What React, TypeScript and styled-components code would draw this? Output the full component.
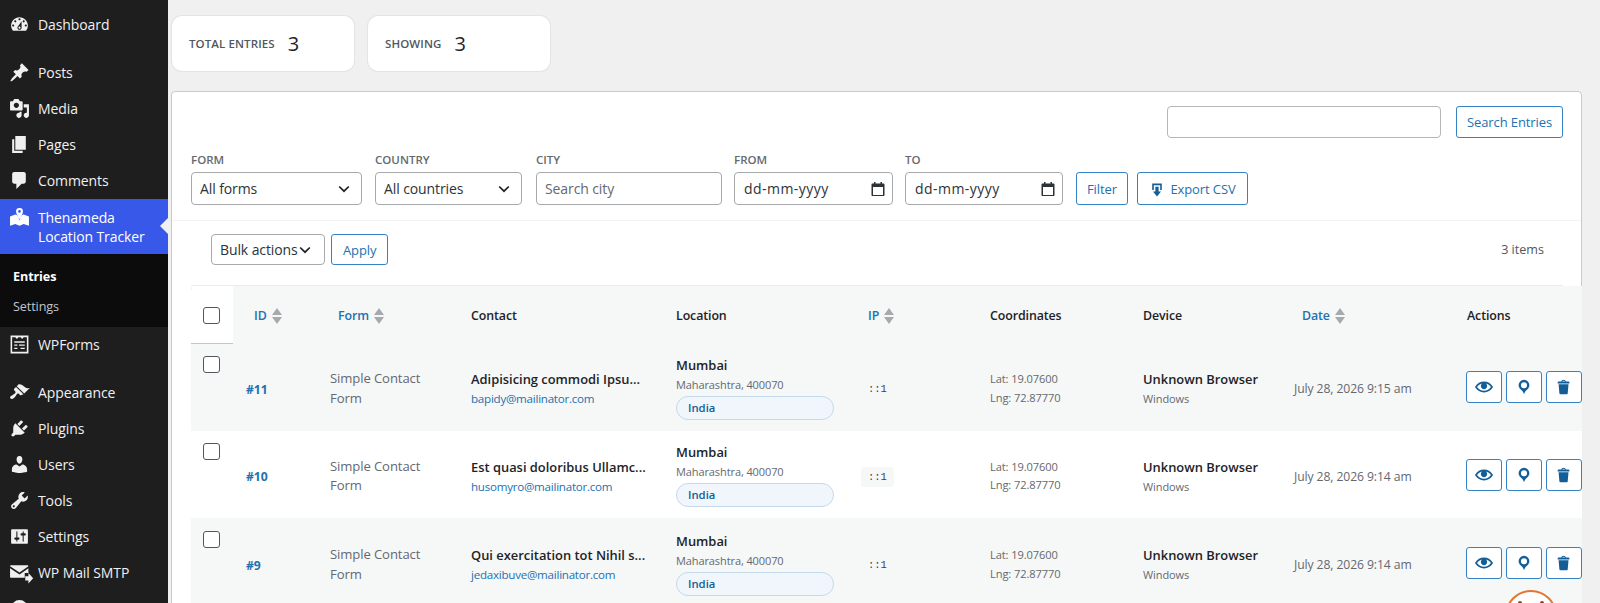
import React from 'react';
import styled, { createGlobalStyle } from 'styled-components';

const GlobalStyle = createGlobalStyle`
  html, body {
    margin: 0;
    height: 100%;
    overflow: hidden;
    background: #f0f0f1;
  }
  body {
    font-family: "Open Sans", "Noto Sans", sans-serif;
    color: #3c434a;
  }
`;

const chevron = `url("data:image/svg+xml,%3Csvg xmlns='http://www.w3.org/2000/svg' viewBox='0 0 12 8'%3E%3Cpath d='M1.2 1.5 6 6.2l4.8-4.7' fill='none' stroke='%231d2327' stroke-width='1.7'/%3E%3C/svg%3E")`;

const Page = styled.div`
  display: flex;
  height: 603px;
  overflow: hidden;
  position: relative;
`;

// admin menu
const Sidebar = styled.nav`
  width: 168px;
  flex: none;
  background: #1e1e1e;
  padding-top: 7px;
`;

const MenuItem = styled.div<{ $active?: boolean }>`
  position: relative;
  display: flex;
  align-items: center;
  gap: 8px;
  box-sizing: border-box;
  padding: 0 0 ${p => (p.$active ? 0 : 2)}px 9px;
  height: ${p => (p.$active ? 55 : 36)}px;
  color: ${p => (p.$active ? '#fff' : '#f0f0f1')};
  font-size: 14px;
  letter-spacing: -0.1px;
  line-height: 19px;
  background: ${p => (p.$active ? '#3858e9' : 'transparent')};
  svg {
    width: 21px;
    height: 21px;
    flex: none;
    fill: currentColor;
    overflow: visible;
    ${p => p.$active && 'align-self: flex-start; margin-top: 9px;'}
  }
`;

const MenuGap = styled.div<{ $h?: number }>`
  height: ${p => p.$h ?? 12}px;
`;

const ActiveArrow = styled.span`
  position: absolute;
  right: 0;
  top: 19px;
  border: 8.5px solid transparent;
  border-left: 0;
  border-right-color: #f0f0f1;
  border-right-width: 8px;
`;

const Submenu = styled.div`
  background: #0c0c0c;
  height: 73px;
  padding-top: 8px;
  box-sizing: border-box;
`;

const SubItem = styled.div<{ $current?: boolean }>`
  height: 30px;
  line-height: 30px;
  padding-left: 13px;
  font-size: 12.6px;
  letter-spacing: -0.1px;
  color: ${p => (p.$current ? '#fff' : '#c3c4c7')};
  font-weight: ${p => (p.$current ? 700 : 400)};
`;

// content
const Main = styled.main`
  flex: 1;
  min-width: 0;
  padding: 16px 18px 0 3px;
`;

const StatsRow = styled.div`
  display: flex;
  gap: 14px;
  margin: 0 0 20px 1px;
`;

const StatCard = styled.div`
  width: 182px;
  height: 55px;
  box-sizing: border-box;
  display: flex;
  align-items: center;
  gap: 13px;
  padding: 0 0 0 17px;
  background: #fff;
  border-radius: 10px;
  box-shadow: 0 0 0 1px #e4e4e6;
`;

const StatLabel = styled.span`
  font-size: 11.5px;
  font-weight: 600;
  letter-spacing: 0.1px;
  color: #50575e;
`;

const StatValue = styled.span`
  font-size: 20px;
  color: #1d2327;
`;

const Panel = styled.section`
  background: #fff;
  border: 1px solid #c9cacc;
  border-radius: 4px 4px 0 0;
  height: 520px;
`;

const SearchRow = styled.div`
  display: flex;
  justify-content: flex-end;
  gap: 15px;
  padding: 14px 18px 0 0;
`;

const SearchInput = styled.input`
  width: 274px;
  height: 32px;
  box-sizing: border-box;
  border: 1px solid #b5b6b8;
  border-radius: 4px;
  background: #fff;
`;

const OutlineButton = styled.button<{ $h?: number; $px?: number }>`
  display: inline-flex;
  align-items: center;
  justify-content: center;
  gap: 5px;
  box-sizing: border-box;
  height: ${p => p.$h ?? 33}px;
  padding: 0 ${p => p.$px ?? 11}px;
  background: #fff;
  border: 1px solid #3582c4;
  border-radius: 3px;
  color: #2271b1;
  font: 400 13px "Open Sans", sans-serif;
  letter-spacing: -0.1px;
  svg { width: 16px; height: 16px; fill: #135e96; margin-top: 2px; }
`;

const FilterBar = styled.div`
  display: flex;
  align-items: flex-end;
  padding: 14px 0 15px 19px;
  border-bottom: 1px solid #f3f3f4;
`;

const FilterField = styled.label<{ $w: number; $mr?: number }>`
  display: flex;
  flex-direction: column;
  width: ${p => p.$w}px;
  margin-right: ${p => p.$mr ?? 13}px;
`;

const FilterLabel = styled.span`
  height: 20px;
  font-size: 11.5px;
  font-weight: 600;
  line-height: 16px;
  color: #646970;
`;

const FieldBase = `
  height: 33px;
  box-sizing: border-box;
  border: 1px solid #a8a9ab;
  border-radius: 4px;
  background-color: #fff;
  font: 400 14px "Open Sans", sans-serif;
  letter-spacing: -0.1px;
  color: #2c3338;
`;

const FilterSelect = styled.select`
  ${FieldBase}
  width: 100%;
  appearance: none;
  padding: 0 8px;
  background-image: ${chevron};
  background-repeat: no-repeat;
  background-size: 12px 8px;
  background-position: right 11px center;
`;

const FilterInput = styled.input`
  ${FieldBase}
  width: 100%;
  padding: 0 8px;
  &::placeholder { color: #646970; opacity: 1; }
`;

const DateBox = styled.div`
  ${FieldBase}
  letter-spacing: 0.45px;
  display: flex;
  align-items: center;
  justify-content: space-between;
  padding: 0 6px 0 9px;
  svg { width: 16px; height: 16px; }
`;

const ButtonGroup = styled.div`
  display: flex;
  gap: 9px;
`;

const BulkRow = styled.div`
  display: flex;
  align-items: center;
  height: 31px;
  margin-top: 13px;
  padding: 0 37px 0 39px;
  gap: 6px;
`;

const BulkSelect = styled.select`
  ${FieldBase}
  height: 31px;
  width: 114px;
  appearance: none;
  padding: 0 8px;
  background-image: ${chevron};
  background-repeat: no-repeat;
  background-size: 12px 8px;
  background-position: right 13px center;
`;

const ItemCount = styled.span`
  margin-left: auto;
  font-size: 12.6px;
  color: #50575e;
`;

const TableWrap = styled.div`
  margin: 20px 0 0 19px;
`;

const Rule = styled.div`
  height: 1px;
  margin-right: 18px;
  background: #ececed;
`;

const Table = styled.table`
  width: 100%;
  table-layout: fixed;
  border-collapse: collapse;
  font-size: 12.8px;
`;

const HeadRow = styled.tr`
  height: 57px;
  background: #f6f7f7;
  box-shadow: 0 1px 0 #f0f0f1;
`;

const HeadCheck = styled.th`
  background: #fff;
  padding: 2px 0 0 12px;
  text-align: left;
  border-bottom: 1px solid #c3c4c7;
  border-radius: 6px 0 0 0;
`;

const Th = styled.th<{ $inset?: number; $link?: boolean }>`
  padding: 1px 0 0 ${p => p.$inset ?? 13}px;
  text-align: left;
  font-size: 12.4px;
  font-weight: 600;
  letter-spacing: -0.1px;
  color: ${p => (p.$link ? '#2271b1' : '#1d2327')};
  svg { width: 10px; height: 16px; margin-left: 5px; vertical-align: -4px; fill: #a7aaad; }
`;

const Row = styled.tr<{ $alt: boolean }>`
  height: 87px;
  background: ${p => (p.$alt ? '#f6f7f7' : '#fff')};
  box-shadow: 0 1px 0 #f0f0f1;
  &:first-child { height: 88px; }
  &:nth-child(3) { height: 90px; }
  &:nth-child(3) input { margin-top: 1px; }
`;

const Td = styled.td<{ $flush?: boolean }>`
  padding: ${p => (p.$flush ? 0 : 3)}px 0 0 13px;
  vertical-align: middle;
`;

const CheckCell = styled.td`
  padding: 12px 0 0 12px;
  vertical-align: top;
`;

const Checkbox = styled.input.attrs({ type: 'checkbox' })`
  appearance: none;
  display: block;
  width: 17px;
  height: 17px;
  margin: 0;
  background: #fff;
  border: 1.5px solid #50575e;
  border-radius: 3px;
  box-sizing: border-box;
`;

const EntryId = styled.a`
  font-weight: 700;
  color: #2271b1;
  font-size: 12.2px;
  letter-spacing: -0.1px;
`;

const FormName = styled.div`
  color: #646970;
  line-height: 19.5px;
  font-size: 13.1px;
  letter-spacing: -0.1px;
`;

const Strong = styled.div`
  font-size: 12.9px;
  font-weight: 600;
  color: #1d2327;
  line-height: 20px;
  white-space: nowrap;
`;

const Email = styled.a`
  display: block;
  font-size: 11.6px;
  line-height: 19px;
  color: #2271b1;
  letter-spacing: -0.25px;
`;

const Sub = styled.div`
  font-size: 11px;
  line-height: 19px;
  color: #646970;
  letter-spacing: -0.1px;
`;

const CountryPill = styled.span`
  display: block;
  width: 158px;
  height: 24px;
  box-sizing: border-box;
  margin-top: 2px;
  padding-left: 11px;
  line-height: 22px;
  font-size: 11.3px;
  font-weight: 600;
  color: #135e96;
  background: #f0f6fc;
  border: 1px solid #c5d9ed;
  border-radius: 12px;
`;

const IpCode = styled.code`
  display: inline-block;
  margin-left: -7px;
  padding: 0 7px;
  height: 20px;
  font: 400 10.5px/20px "Liberation Mono", monospace;
  color: #3c434a;
  background: #f6f7f7;
  border-radius: 3px;
`;

const Coords = styled.div`
  font-size: 11.1px;
  line-height: 18.5px;
  color: #646970;
  letter-spacing: -0.1px;
`;

const DateText = styled.div`
  font-size: 12.2px;
  color: #646970;
  letter-spacing: -0.1px;
  white-space: nowrap;
`;

const Actions = styled.div`
  display: flex;
  gap: 4px;
  margin-left: -1px;
`;

const IconButton = styled.button`
  width: 36px;
  height: 32px;
  padding: 0;
  display: flex;
  align-items: center;
  justify-content: center;
  background: #fff;
  border: 1px solid #3582c4;
  border-radius: 3px;
  svg { width: 18px; height: 18px; fill: #135e96; }
`;

const HelpBubble = styled.div`
  position: absolute;
  left: 1505px;
  top: 590px;
  width: 52px;
  height: 52px;
  box-sizing: border-box;
  border: 2.5px solid #e27730;
  border-radius: 50%;
  background: #fff;
  &::before, &::after {
    content: '';
    position: absolute;
    top: 9px;
    width: 4px;
    height: 4px;
    border-radius: 50%;
    background: #7a4a2a;
  }
  &::before { left: 11px; }
  &::after { right: 11px; }
`;

const icons = {
  dashboard: 'M3.76 16h12.48c1.1-1.37 1.76-3.11 1.76-5 0-4.42-3.58-8-8-8s-8 3.58-8 8c0 1.89.66 3.63 1.76 5zM10 4c.55 0 1 .45 1 1s-.45 1-1 1-1-.45-1-1 .45-1 1-1zM6 6c.55 0 1 .45 1 1s-.45 1-1 1-1-.45-1-1 .45-1 1-1zm8 0c.55 0 1 .45 1 1s-.45 1-1 1-1-.45-1-1 .45-1 1-1zm-5.37 5.55L12 7v6c0 1.1-.9 2-2 2s-2-.9-2-2c0-.57.24-1.08.63-1.45zM4 10c.55 0 1 .45 1 1s-.45 1-1 1-1-.45-1-1 .45-1 1-1zm12 0c.55 0 1 .45 1 1s-.45 1-1 1-1-.45-1-1 .45-1 1-1zm-5 3c0-.55-.45-1-1-1s-1 .45-1 1 .45 1 1 1 1-.45 1-1z',
  post: 'M10.44 3.02l1.82-1.82 6.36 6.35-1.83 1.82c-1.05-.68-2.48-.57-3.41.36l-.75.75c-.92.93-1.04 2.35-.35 3.41l-1.83 1.82-2.41-2.41-2.8 2.79c-.42.42-3.38 2.71-3.8 2.29s1.86-3.39 2.28-3.81l2.79-2.79L4.1 9.36l1.83-1.82c1.05.69 2.48.57 3.4-.36l.75-.75c.93-.92 1.05-2.35.36-3.41z',
  media: 'M13 11V4c0-.55-.45-1-1-1h-1.67L9 1H5L3.67 3H2c-.55 0-1 .45-1 1v7c0 .55.45 1 1 1h10c.55 0 1-.45 1-1zM7 4.5c1.38 0 2.5 1.12 2.5 2.5S8.38 9.5 7 9.5 4.5 8.38 4.5 7 5.62 4.5 7 4.5zM14 6h5v10.5c0 1.38-1.12 2.5-2.5 2.5S14 17.88 14 16.5s1.12-2.5 2.5-2.5c.17 0 .34.02.5.05V9h-3V6zm-4 8.05V13h2v3.5c0 1.38-1.12 2.5-2.5 2.5S7 17.88 7 16.5 8.12 14 9.5 14c.17 0 .34.02.5.05z',
  page: 'M6 15V2h10v13H6zm-1 1h8v2H3V5h2v11z',
  comments: 'M5 2h9c1.1 0 2 .9 2 2v7c0 1.1-.9 2-2 2h-2l-5 5v-5H5c-1.1 0-2-.9-2-2V4c0-1.1.9-2 2-2z',
  appearance: 'M14.48 11.06L7.41 3.99l1.5-1.5c.5-.56 2.3-.47 3.51.32 1.21.8 1.43 1.28 2.91 2.1 1.18.64 2.45 1.26 4.45.85zm-.71.71L6.7 4.7 4.93 6.47c-.39.39-.39 1.02 0 1.41l1.06 1.06c.39.39.39 1.03 0 1.42-.6.6-1.43 1.11-2.21 1.69-.35.26-.7.53-1.01.84C1.43 13.23.4 14.75 1.46 15.82c1.07 1.06 2.59.03 3.95-1.32.31-.31.58-.66.84-1.01.58-.78 1.09-1.61 1.69-2.21.39-.39 1.03-.39 1.42 0l1.06 1.06c.39.39 1.02.39 1.41 0z',
  plugins: 'M13.11 4.36L9.87 7.6 8 5.73l3.24-3.24c.35-.34 1.05-.2 1.56.32.52.51.66 1.21.31 1.55zm-8 1.77l.91-1.12 9.01 9.01-1.19.84c-.71.71-2.63 1.16-3.82 1.16H6.14L4.9 17.26c-.59.59-1.54.59-2.12 0-.59-.58-.59-1.53 0-2.12l1.24-1.24v-3.88c0-1.13.4-3.19 1.09-3.89zm7.26 3.97l3.24-3.24c.34-.35 1.04-.21 1.55.31.52.51.66 1.21.31 1.55l-3.24 3.25z',
  users: 'M10 9.25c-2.27 0-2.73-3.44-2.73-3.44C7 4.02 7.82 2 9.97 2c2.16 0 2.98 2.02 2.71 3.81 0 0-.41 3.44-2.68 3.44zm0 2.57L12.72 10c2.39 0 4.52 2.33 4.52 4.53v2.49s-3.65 1.13-7.24 1.13c-3.65 0-7.24-1.13-7.24-1.13v-2.49c0-2.25 1.94-4.48 4.47-4.48z',
  tools: 'M16.68 9.77c-1.34 1.34-3.3 1.67-4.95.99l-5.41 6.52c-.99.99-2.59.99-3.58 0s-.99-2.59 0-3.57l6.52-5.42c-.68-1.65-.35-3.61.99-4.95 1.28-1.28 3.12-1.62 4.72-1.06l-2.89 2.89 2.82 2.82 2.86-2.87c.53 1.58.18 3.39-1.08 4.65zM3.81 16.21c.4.39 1.04.39 1.43 0 .4-.4.4-1.04 0-1.43-.39-.4-1.03-.4-1.43 0-.39.39-.39 1.03 0 1.43z',
  settings: 'M18 16V4c0-.55-.45-1-1-1H3c-.55 0-1 .45-1 1v12c0 .55.45 1 1 1h14c.55 0 1-.45 1-1zM8 11h1c.55 0 1 .45 1 1s-.45 1-1 1H8v1.5c0 .28-.22.5-.5.5s-.5-.22-.5-.5V13H6c-.55 0-1-.45-1-1s.45-1 1-1h1V5.5c0-.28.22-.5.5-.5s.5.22.5.5V11zm5-2h-1c-.55 0-1-.45-1-1s.45-1 1-1h1V5.5c0-.28.22-.5.5-.5s.5.22.5.5V7h1c.55 0 1 .45 1 1s-.45 1-1 1h-1v5.5c0 .28-.22.5-.5.5s-.5-.22-.5-.5V9z',
  map: 'M1 8l5-1.800 2.300.8L10 11.800 11.700 7l2.300-.8L19 8v9l-5-1.700L10 17l-4-1.700L1 17zM10 0a3.300 3.300 0 0 1 3.300 3.300c0 1.800-2 5.200-3.300 7.300-1.300-2.100-3.300-5.500-3.300-7.300A3.300 3.300 0 0 1 10 0zm0 2a1.300 1.300 0 1 0 0 2.600A1.300 1.300 0 0 0 10 2z',
  wpforms: 'M1.500 1.500h17v17h-17zM3 3v14h14V3h-3l-1.500 1.700L11 3H9L7.500 4.700 6 3zM5 7h10v1.300H5zM5 10h3v1.300H5zM9.500 10H15v1.300H9.500zM5 13h3v1.300H5zM11 13h4v1.300h-4z',
  mail: 'M2 3h15.500c.5 0 1 .4 1 1L10 10 1 4c0-.6.5-1 1-1zM1 6l9 6 8.500-6v4.500H15V15H2c-.6 0-1-.4-1-1zM15.500 13.500H18.500V10.500l4.500 5-4.500 5v-3H15.500z',
  eye: 'M19.700 9.400C17.700 6 14 3.900 10 3.900S2.300 6 .3 9.400L0 10l.3.600c2 3.400 5.700 5.500 9.700 5.500s7.700-2.100 9.700-5.500l.3-.6-.3-.6zM10 14.100c-3.100 0-6-1.600-7.700-4.100C3.600 8 5.700 6.600 8 6.100c-.9.600-1.500 1.700-1.500 2.900 0 1.900 1.600 3.500 3.500 3.500s3.500-1.600 3.500-3.500c0-1.200-.6-2.300-1.500-2.900 2.300.5 4.400 1.900 5.700 3.900-1.700 2.500-4.600 4.100-7.700 4.100z',
  pin: 'M10 2a6 6 0 0 0-6 6c0 2 1.100 3.400 2.500 4.900 1.500 1.500 2.900 3 3.500 5.100.6-2.100 2-3.600 3.500-5.100C14.900 11.400 16 10 16 8a6 6 0 0 0-6-6zm0 2.600a3.400 3.400 0 1 1 0 6.800 3.400 3.400 0 0 1 0-6.800z',
  trash: 'M12 4h3c.6 0 1 .4 1 1v1H3V5c0-.6.500-1 1-1h3c.2-1.100 1.300-2 2.500-2s2.300.9 2.500 2zM8 4h3c-.2-.6-.9-1-1.500-1S8.200 3.400 8 4zM4 7h11l-.9 10.100c0 .5-.5.9-1 .9H5.900c-.5 0-.9-.4-1-.9L4 7z',
  download: 'M14 4v6h2V2H4v8h2V4h8zm-2 2v6h3l-5 6-5-6h3V6h4z',
  circle: 'M10 2a8 8 0 1 0 0 16 8 8 0 0 0 0-16z',
};

const Icon = ({ name }: { name: keyof typeof icons }) => (
  <svg viewBox="0 0 20 20" aria-hidden="true">
    <path fillRule="evenodd" d={icons[name]} />
  </svg>
);

const SortIcon = () => (
  <svg viewBox="0 0 10 16" aria-hidden="true">
    <path d="M5 0l5 7H0zM0 9h10l-5 7z" />
  </svg>
);

const CalendarIcon = () => (
  <svg viewBox="0 0 16 16" aria-hidden="true">
    <path
      fill="#2c3338"
      fillRule="evenodd"
      d="M4 1h1.500v1.500h5V1H12v1.500h1.500c.6 0 1 .4 1 1v10.500c0 .6-.4 1-1 1h-11c-.6 0-1-.4-1-1V3.500c0-.6.4-1 1-1H4zM3 6v8h10V6z"
    />
  </svg>
);

const topMenu: [keyof typeof icons, string][] = [
  ['post', 'Posts'],
  ['media', 'Media'],
  ['page', 'Pages'],
  ['comments', 'Comments'],
];

const lowerMenu: [keyof typeof icons, string][] = [
  ['appearance', 'Appearance'],
  ['plugins', 'Plugins'],
  ['users', 'Users'],
  ['tools', 'Tools'],
  ['settings', 'Settings'],
  ['mail', 'WP Mail SMTP'],
  ['circle', ''],
];

const entries = [
  { id: '#11', name: 'Adipisicing commodi Ipsu...', email: 'bapidy@mailinator.com', date: 'July 28, 2026 9:15 am' },
  { id: '#10', name: 'Est quasi doloribus Ullamc...', email: 'husomyro@mailinator.com', date: 'July 28, 2026 9:14 am' },
  { id: '#9', name: 'Qui exercitation tot Nihil s...', email: 'jedaxibuve@mailinator.com', date: 'July 28, 2026 9:14 am' },
];

const columnWidths = [42, 84, 141, 205, 192, 122, 153, 151, 173, 128];

const App = () => (
  <Page>
    <GlobalStyle />
    <Sidebar>
      <MenuItem><Icon name="dashboard" />Dashboard</MenuItem>
      <MenuGap />
      {topMenu.map(([icon, label]) => (
        <MenuItem key={label}><Icon name={icon} />{label}</MenuItem>
      ))}
      <MenuItem $active>
        <Icon name="map" />
        <span>Thenameda<br />Location Tracker</span>
        <ActiveArrow />
      </MenuItem>
      <Submenu>
        <SubItem $current>Entries</SubItem>
        <SubItem>Settings</SubItem>
      </Submenu>
      <MenuItem><Icon name="wpforms" />WPForms</MenuItem>
      <MenuGap />
      {lowerMenu.map(([icon, label]) => (
        <MenuItem key={icon}><Icon name={icon} />{label}</MenuItem>
      ))}
    </Sidebar>

    <Main>
      <StatsRow>
        <StatCard><StatLabel>TOTAL ENTRIES</StatLabel><StatValue>3</StatValue></StatCard>
        <StatCard><StatLabel>SHOWING</StatLabel><StatValue>3</StatValue></StatCard>
      </StatsRow>

      <Panel>
        <SearchRow>
          <SearchInput type="search" />
          <OutlineButton $h={32} $px={10}>Search Entries</OutlineButton>
        </SearchRow>

        <FilterBar>
          <FilterField $w={171}>
            <FilterLabel>FORM</FilterLabel>
            <FilterSelect defaultValue="all"><option value="all">All forms</option></FilterSelect>
          </FilterField>
          <FilterField $w={147} $mr={14}>
            <FilterLabel>COUNTRY</FilterLabel>
            <FilterSelect defaultValue="all"><option value="all">All countries</option></FilterSelect>
          </FilterField>
          <FilterField $w={186} $mr={12}>
            <FilterLabel>CITY</FilterLabel>
            <FilterInput placeholder="Search city" />
          </FilterField>
          <FilterField $w={159} $mr={12}>
            <FilterLabel>FROM</FilterLabel>
            <DateBox>dd-mm-yyyy<CalendarIcon /></DateBox>
          </FilterField>
          <FilterField $w={158}>
            <FilterLabel>TO</FilterLabel>
            <DateBox>dd-mm-yyyy<CalendarIcon /></DateBox>
          </FilterField>
          <ButtonGroup>
            <OutlineButton $px={10}>Filter</OutlineButton>
            <OutlineButton $px={11.5}><Icon name="download" />Export CSV</OutlineButton>
          </ButtonGroup>
        </FilterBar>

        <BulkRow>
          <BulkSelect defaultValue="bulk"><option value="bulk">Bulk actions</option></BulkSelect>
          <OutlineButton $h={31}>Apply</OutlineButton>
          <ItemCount>3 items</ItemCount>
        </BulkRow>

        <TableWrap>
          <Rule />
          <Table>
            <colgroup>
              {columnWidths.map((w, i) => <col key={i} width={w} />)}
            </colgroup>
            <thead>
              <HeadRow>
                <HeadCheck><Checkbox /></HeadCheck>
                <Th $inset={21} $link>ID<SortIcon /></Th>
                <Th $inset={21} $link>Form<SortIcon /></Th>
                <Th>Contact</Th>
                <Th>Location</Th>
                <Th $link>IP<SortIcon /></Th>
                <Th>Coordinates</Th>
                <Th>Device</Th>
                <Th $inset={21} $link>Date<SortIcon /></Th>
                <Th>Actions</Th>
              </HeadRow>
            </thead>
            <tbody>
              {entries.map((entry, i) => (
                <Row key={entry.id} $alt={i % 2 === 0}>
                  <CheckCell><Checkbox /></CheckCell>
                  <Td><EntryId>{entry.id}</EntryId></Td>
                  <Td><FormName>Simple Contact<br />Form</FormName></Td>
                  <Td>
                    <Strong>{entry.name}</Strong>
                    <Email>{entry.email}</Email>
                  </Td>
                  <Td $flush>
                    <Strong>Mumbai</Strong>
                    <Sub>Maharashtra, 400070</Sub>
                    <CountryPill>India</CountryPill>
                  </Td>
                  <Td><IpCode>::1</IpCode></Td>
                  <Td><Coords>Lat: 19.07600<br />Lng: 72.87770</Coords></Td>
                  <Td>
                    <Strong>Unknown Browser</Strong>
                    <Sub>Windows</Sub>
                  </Td>
                  <Td><DateText>{entry.date}</DateText></Td>
                  <Td $flush>
                    <Actions>
                      <IconButton><Icon name="eye" /></IconButton>
                      <IconButton><Icon name="pin" /></IconButton>
                      <IconButton><Icon name="trash" /></IconButton>
                    </Actions>
                  </Td>
                </Row>
              ))}
            </tbody>
          </Table>
        </TableWrap>
      </Panel>
    </Main>
    <HelpBubble />
  </Page>
);

export default App;
